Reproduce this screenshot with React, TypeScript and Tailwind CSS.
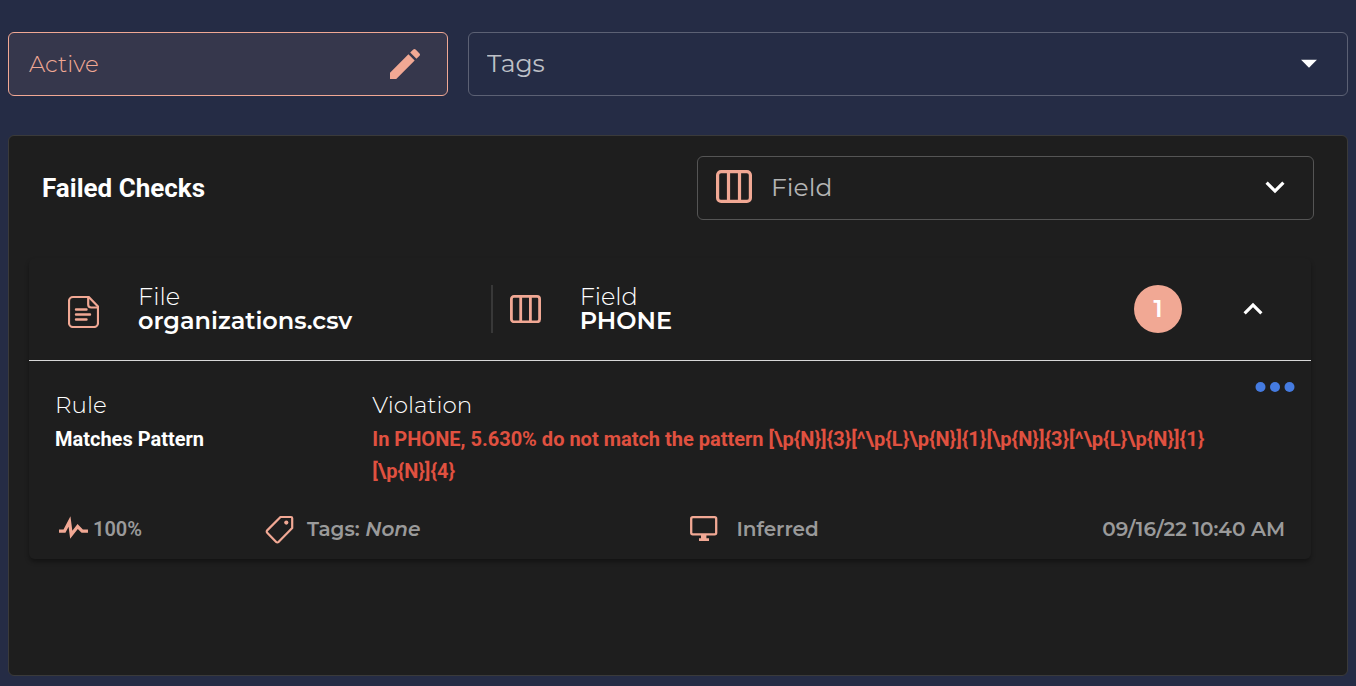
import { useState } from "react";
import {
  MdArrowDropDown,
  MdEdit,
  MdKeyboardArrowDown,
  MdKeyboardArrowUp,
} from "react-icons/md";

function ColumnsIcon({ large = false }: { large?: boolean }) {
  if (large) {
    return (
      <svg width="36" height="33" viewBox="0 0 36 33" fill="none" stroke="currentColor" strokeWidth="3.2" aria-hidden="true">
        <rect x="1.6" y="1.6" width="32.8" height="29.8" rx="3.5" />
        <path d="M12.5 2v29M23.5 2v29" />
      </svg>
    );
  }
  return (
    <svg width="31" height="28" viewBox="0 0 31 28" fill="none" stroke="currentColor" strokeWidth="2.8" aria-hidden="true">
      <rect x="1.4" y="1.4" width="28.2" height="25.4" rx="2.6" />
      <path d="M10.7 2v24.5M20.4 2v24.5" />
    </svg>
  );
}

function FileIcon() {
  return (
    <svg width="31" height="38" viewBox="0 0 31 38" fill="none" stroke="currentColor" strokeWidth="2.2" strokeLinejoin="round" strokeLinecap="round" aria-hidden="true">
      <path d="M20.8 7H5a4 4 0 0 0-4 4v22a4 4 0 0 0 4 4h21a4 4 0 0 0 4-4V16.5z" />
      <path d="M20.2 7v7.5a3 3 0 0 0 3 3H30" />
      <path strokeWidth="2.4" d="M8 19.5h10.5M8 24.5h14M8 29.5h10.5" />
    </svg>
  );
}

function PulseIcon() {
  return (
    <svg width="29" height="28" viewBox="3 4 18 17.4" fill="currentColor" aria-hidden="true">
      <path d="M3,13H5.79L10.1,4.79L11.28,13.75L14.5,9.66L17.83,13H21V15H17L14.67,12.67L9.92,18.73L8.94,11.31L7,15H3V13Z" />
    </svg>
  );
}

function TagIcon() {
  return (
    <svg width="29" height="29" viewBox="0 0 29 29" fill="none" stroke="currentColor" strokeWidth="2.2" strokeLinejoin="round" aria-hidden="true">
      <path d="M15.5 2H26a1.2 1.2 0 0 1 1.2 1.2V13L13.5 27a1.6 1.6 0 0 1-2.3 0L2.2 17.7a1.6 1.6 0 0 1 0-2.3z" />
      <circle cx="21.3" cy="7.6" r="2.1" fill="currentColor" stroke="none" />
    </svg>
  );
}

function MonitorIcon() {
  return (
    <svg width="28" height="26" viewBox="0 0 28 26" fill="none" aria-hidden="true">
      <rect x="1.2" y="1.2" width="25" height="17.2" rx="1.6" stroke="currentColor" strokeWidth="2.3" />
      <path d="M11 19h5.4v3.2H19V25H9v-2.8h2z" fill="currentColor" />
    </svg>
  );
}

function MoreIcon() {
  return (
    <svg width="40" height="12" viewBox="0 0 40 12" fill="currentColor" aria-hidden="true">
      <circle cx="5.5" cy="6" r="5" />
      <circle cx="20" cy="6" r="5" />
      <circle cx="34.5" cy="6" r="5" />
    </svg>
  );
}

export default function App() {
  const [open, setOpen] = useState(true);

  return (
    <main className="flex min-h-screen flex-col gap-[39px] bg-[#252c45] px-2 pt-8 pb-2.5 font-['Montserrat','Inter',sans-serif] text-white">
      <div className="grid grid-cols-[1fr_2fr] gap-5">
        <button
          type="button"
          className="flex h-16 items-center justify-between rounded-md border border-[#f1a894] bg-[#36374c] pr-[22px] pl-5 text-[23px] font-light text-[#f1a894]"
        >
          Active
          <MdEdit size={40} aria-hidden="true" />
        </button>
        <div className="relative">
          <select
            aria-label="Tags"
            className="h-16 w-full appearance-none rounded-md border border-[#5c6174] bg-transparent px-[18px] text-[25px] text-[#bec0c7]"
          >
            <option>Tags</option>
          </select>
          <MdArrowDropDown size={38} aria-hidden="true" className="pointer-events-none absolute top-3 right-5" />
        </div>
      </div>

      <section className="flex-1 rounded-md border border-[#3a3a3a] bg-[#1e1e1e] pt-5 pb-8">
        <header className="flex items-center justify-between px-[33px]">
          <h1 className="font-['Roboto',sans-serif] text-[26px] font-bold">Failed Checks</h1>
          <div className="relative w-[617px] max-w-1/2">
            <span className="pointer-events-none absolute inset-y-0 left-[19px] flex items-center pb-1 text-[#f1a894]">
              <ColumnsIcon large />
            </span>
            <select
              aria-label="Field"
              className="h-16 w-full appearance-none rounded-md border border-[#555555] bg-transparent pl-[73px] text-[25px] text-[#b4b4b4]"
            >
              <option>Field</option>
            </select>
            <MdKeyboardArrowDown size={38} aria-hidden="true" className="pointer-events-none absolute top-3 right-5" />
          </div>
        </header>

        <article className="mt-[38px] mr-9 ml-5 rounded-md shadow-[0_3px_4px_rgba(0,0,0,0.35)]">
          <button
            type="button"
            aria-expanded={open}
            onClick={() => setOpen(!open)}
            className="flex h-[103px] w-full items-center border-b border-[#d8d8d8] pr-[39px] text-left text-2xl"
          >
            <span className="flex h-12 w-[37.3%] items-center gap-[39px] border-r-2 border-[#383838] pl-[39px]">
              <span className="text-[#f1a894]">
                <FileIcon />
              </span>
              <span className="flex flex-col leading-6">
                <span className="font-light">File</span>
                <span className="font-semibold">organizations.csv</span>
              </span>
            </span>
            <span className="flex flex-1 items-center gap-[39px] pl-[17px]">
              <span className="text-[#f1a894]">
                <ColumnsIcon />
              </span>
              <span className="flex flex-col leading-6">
                <span className="font-light">Field</span>
                <span className="font-semibold">PHONE</span>
              </span>
            </span>
            <span className="mr-[52px] flex size-12 items-center justify-center rounded-full bg-[#f1a894] font-semibold">
              1
            </span>
            <MdKeyboardArrowUp size={38} aria-hidden="true" />
          </button>

          {open && (
            <div className="px-[26px] pt-3 pb-3.5">
              <div className="-mr-2.5 flex h-7 items-center justify-end">
                <button type="button" aria-label="More actions" className="text-[#457be0]">
                  <MoreIcon />
                </button>
              </div>
              <div className="-mt-3.5 grid grid-cols-[25.8%_1fr]">
                <div>
                  <h2 className="text-[23px] leading-9 font-light">Rule</h2>
                  <p className="font-['Roboto',sans-serif] text-xl leading-8 font-bold">Matches Pattern</p>
                </div>
                <div className="pr-11">
                  <h2 className="text-[23px] leading-9 font-light">Violation</h2>
                  <p className="font-['Roboto',sans-serif] text-xl leading-8 font-bold text-[#e05140]">
                    {"In PHONE, 5.630% do not match the pattern [\\p{N}]{3}[^\\p{L}\\p{N}]{1}[\\p{N}]{3}[^\\p{L}\\p{N}]{1}[\\p{N}]{4}"}
                  </p>
                </div>
              </div>
              <footer className="mt-[26px] flex items-center pl-1 text-xl leading-8 font-semibold text-[#9a9a9a]">
                <span className="flex w-[16.8%] items-center gap-[5px]">
                  <span className="text-[#f1a894]">
                    <PulseIcon />
                  </span>
                  <span className="font-['Roboto',sans-serif]">100%</span>
                </span>
                <span className="flex w-[34.7%] items-center gap-[13px]">
                  <span className="text-[#f1a894]">
                    <TagIcon />
                  </span>
                  <span>
                    Tags: <em>None</em>
                  </span>
                </span>
                <span className="flex flex-1 items-center gap-[18px]">
                  <span className="text-[#f1a894]">
                    <MonitorIcon />
                  </span>
                  Inferred
                </span>
                <time dateTime="2022-09-16T10:40">09/16/22 10:40 AM</time>
              </footer>
            </div>
          )}
        </article>
      </section>
    </main>
  );
}
